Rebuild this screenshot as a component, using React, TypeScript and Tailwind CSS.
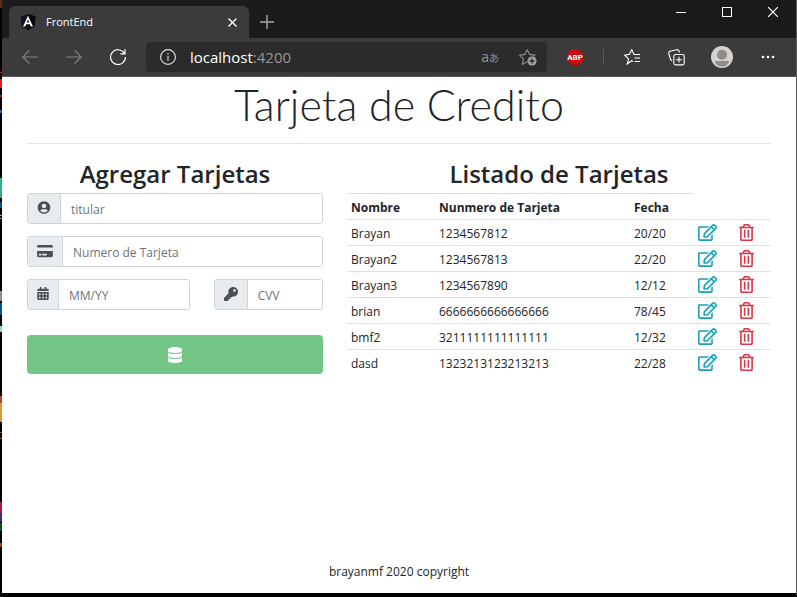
import React from 'react';
import type { IconType } from 'react-icons';
import { FaCalendarAlt, FaCreditCard, FaDatabase, FaKey, FaRegEdit, FaRegTrashAlt, FaUserCircle } from 'react-icons/fa';

const cards = [
  { name: 'Brayan', number: '1234567812', date: '20/20' },
  { name: 'Brayan2', number: '1234567813', date: '22/20' },
  { name: 'Brayan3', number: '1234567890', date: '12/12' },
  { name: 'brian', number: '6666666666666666', date: '78/45' },
  { name: 'bmf2', number: '3211111111111111', date: '12/32' },
  { name: 'dasd', number: '1323213123213213', date: '22/28' },
];

function DesktopEdge() {
  return (
    <svg className="pointer-events-none absolute left-0 top-0" width="2" height="597" aria-hidden="true">
      <rect width="2" height="597" fill="#000" />
      <rect y="0" width="2" height="8" fill="#5e2c0c" />
      <rect y="79" width="2" height="9" fill="#e01b1b" />
      <rect y="95" width="2" height="2" fill="#c01818" />
      <rect y="110" width="2" height="3" fill="#2f5fc0" />
      <rect y="72" width="2" height="1" fill="#c01818" />
      <rect y="178" width="2" height="12" fill="#2bb39a" />
      <rect y="190" width="2" height="8" fill="#3ea56c" />
      <rect y="202" width="2" height="6" fill="#0d4a8c" />
      <rect y="215" width="2" height="1" fill="#c8a882" />
      <rect y="218" width="2" height="1" fill="#a09090" />
      <rect y="291" width="2" height="10" fill="#8d8d98" />
      <rect y="303" width="2" height="12" fill="#07508a" />
      <rect y="326" width="2" height="6" fill="#8fd6b8" />
      <rect y="396" width="2" height="7" fill="#c44030" />
      <rect y="403" width="2" height="19" fill="#d6a02b" />
      <rect y="432" width="2" height="1" fill="#8c5810" />
      <rect y="438" width="2" height="1" fill="#8c5810" />
      <rect y="502" width="2" height="11" fill="#b01840" />
      <rect y="513" width="2" height="9" fill="#2b2f80" />
      <rect y="523" width="2" height="8" fill="#0f4a22" />
      <rect y="543" width="2" height="4" fill="#9c4410" />
    </svg>
  );
}

function TabBar() {
  return (
    <div className="flex h-[38px] items-end bg-[#1b1b1b] pl-[7px]">
      <div className="flex h-8 w-60 items-center rounded-t-md bg-[#3b3b3b] pl-[11px] pr-[11px] text-white">
        <svg width="16" height="16" viewBox="0 0 16 16" aria-hidden="true">
          <path d="M8 0 L15.5 2.6 L14.4 12.4 L8 16 L1.6 12.4 L.5 2.6Z" fill="#0e1420" />
          <path d="M8 0 L15.5 2.6 L14.4 12.4 L8 16Z" fill="#05070d" />
          <path d="M8 1.8 L3 12.6 H5.2 L6.1 10.3 H9.9 L10.8 12.6 H13Z M8 5.4 L9.3 8.5 H6.7Z" fill="#fff" fillRule="evenodd" />
        </svg>
        <span className="ml-2.5 flex-1 text-[11px]">FrontEnd</span>
        <button type="button" aria-label="Cerrar pestaña" className="flex size-3 items-center justify-center">
          <svg width="9" height="9" viewBox="0 0 9 9" stroke="#fff" strokeWidth="1.3"><path d="M.5 .5 L8.5 8.5 M8.5 .5 L.5 8.5" /></svg>
        </button>
      </div>
      <button type="button" aria-label="Nueva pestaña" className="mb-[9px] ml-[11px]">
        <svg width="14" height="14" viewBox="0 0 14 14" stroke="#a8a8a8" strokeWidth="1.4"><path d="M7 0 V14 M0 7 H14" /></svg>
      </button>
      <div className="ml-auto flex items-center gap-9 self-start pr-[18px] pt-[7px]">
        <button type="button" aria-label="Minimizar">
          <svg width="10" height="10" viewBox="0 0 10 10" stroke="#fff"><path d="M0 5.5 H10" /></svg>
        </button>
        <button type="button" aria-label="Maximizar">
          <svg width="10" height="10" viewBox="0 0 10 10" stroke="#fff" fill="none"><rect x=".5" y=".5" width="9" height="9" /></svg>
        </button>
        <button type="button" aria-label="Cerrar">
          <svg width="10" height="10" viewBox="0 0 10 10" stroke="#fff" strokeWidth="1.2"><path d="M0 0 L10 10 M10 0 L0 10" /></svg>
        </button>
      </div>
    </div>
  );
}

function Toolbar() {
  return (
    <div className="flex h-[39px] items-center border-b border-[#5c5c5c] bg-[#3b3b3b] pl-5 pr-[21px] text-white">
      <button type="button" aria-label="Atrás">
        <svg width="16" height="14" viewBox="0 0 16 14" stroke="#858585" fill="none" strokeWidth="1.1"><path d="M16 7 H.8 M7.3 .5 L.8 7 L7.3 13.5" /></svg>
      </button>
      <button type="button" aria-label="Adelante" className="ml-7">
        <svg width="16" height="14" viewBox="0 0 16 14" stroke="#858585" fill="none" strokeWidth="1.1"><path d="M0 7 H15.2 M8.7 .5 L15.2 7 L8.7 13.5" /></svg>
      </button>
      <button type="button" aria-label="Recargar" className="ml-7">
        <svg width="16" height="16" viewBox="0 0 16 16" stroke="#fff" fill="none" strokeWidth="1.2"><path d="M14.4 4.4 A7.4 7.4 0 1 0 15.4 8 M15 .2 V4.8 H10.4" /></svg>
      </button>
      <div className="ml-5 flex h-[30px] min-w-0 flex-1 items-center rounded bg-[#2b2b2b] pl-3.5 pr-2.5">
        <svg width="16" height="16" viewBox="0 0 16 16" stroke="#e4e4e4" fill="none" strokeWidth="1.1" aria-hidden="true"><circle cx="8" cy="8" r="7.4" /><path d="M8 6.8 V11.8 M8 4.3 V5.6" /></svg>
        <span className="ml-3.5 flex-1 text-[15px]">localhost<span className="text-[#969696]">:4200</span></span>
        <span className="pb-0.5 font-['Noto_Sans','Noto_Sans_CJK_JP',sans-serif] text-[#8e8e8e]"><span className="text-sm">a</span><span className="text-[10px]">あ</span></span>
        <button type="button" aria-label="Agregar a favoritos" className="ml-5">
          <svg width="18" height="17" viewBox="0 0 18 17" stroke="#8e8e8e" fill="none" strokeWidth="1.1">
            <path d="M8.5 12.6 L3.4 15.5 L4.4 9.9 L.7 6.2 L5.7 5.4 L8.2 .8 L10.6 5.4 L15.8 6.2 L14.3 7.6" />
            <circle cx="13" cy="12" r="4.6" fill="#a0a0a0" stroke="none" />
            <path d="M13 9.5 V14.5 M10.5 12 H15.5" stroke="#2b2b2b" strokeWidth="1.3" />
          </svg>
        </button>
      </div>
      <button type="button" aria-label="Adblock Plus" className="ml-5">
        <svg width="16" height="16" viewBox="0 0 16 16">
          <path d="M4.7 0 H11.3 L16 4.7 V11.3 L11.3 16 H4.7 L0 11.3 V4.7Z" fill="#c70d0d" />
          <text x="8" y="10.8" textAnchor="middle" fill="#fff" className="font-['Roboto',sans-serif] text-[8px] font-bold">ABP</text>
        </svg>
      </button>
      <span className="ml-5 h-4 w-px bg-[#5a5a5a]" />
      <button type="button" aria-label="Favoritos" className="ml-5">
        <svg width="17" height="16" viewBox="0 0 17 16" stroke="#fff" fill="none" strokeWidth="1.1">
          <path d="M9 12.4 L7.7 11.7 L3.2 15 L4.5 9.8 L.8 6.2 L5.4 5.3 L7.8 .8 L10 5.5 H16 M10.5 9 H16 M10.5 12.5 H16" />
        </svg>
      </button>
      <button type="button" aria-label="Colecciones" className="ml-[27px]">
        <svg width="17" height="17" viewBox="0 0 17 17" stroke="#fff" fill="none" strokeWidth="1.1">
          <rect x="5.8" y="5.5" width="10.4" height="10.4" rx="1.8" /><path d="M11 7.8 V13.6 M8 10.7 H14" />
          <path d="M4 11.7 Q2.8 11.3 2.4 10 L.8 4.5 Q.4 2.8 2 2.3 L8.5 .7 Q10.3 .4 11 2 L11.4 3.5" />
        </svg>
      </button>
      <button type="button" aria-label="Perfil" className="ml-[26px]">
        <svg width="22" height="22" viewBox="0 0 22 22">
          <circle cx="11" cy="11" r="11" fill="#d4d1ce" /><circle cx="11" cy="8.8" r="5" fill="#8f8c89" />
          <path d="M3.5 15 H18.5 Q16.5 20.5 11 20.5 Q5.5 20.5 3.5 15Z" fill="#8f8c89" />
        </svg>
      </button>
      <button type="button" aria-label="Más opciones" className="ml-7">
        <svg width="14" height="4" viewBox="0 0 14 4" fill="#fff"><circle cx="2" cy="2" r="1.3" /><circle cx="7" cy="2" r="1.3" /><circle cx="12" cy="2" r="1.3" /></svg>
      </button>
    </div>
  );
}

function Field({ id, label, icon: Icon, iconClass }: { id: string; label: string; icon: IconType; iconClass: string }) {
  return (
    <div className="flex h-[31px] rounded-[3px] border border-[#ced4da]">
      <label htmlFor={id} aria-label={label} className="flex items-center border-r border-[#ced4da] bg-[#e9ecef] px-[9px] pb-0.5 text-[#495057]">
        <Icon className={iconClass} />
      </label>
      <input id={id} type="text" placeholder={label} className="min-w-0 flex-1 rounded-r-[3px] bg-white px-2.5 pt-0.5 text-xs text-[#495057] outline-none placeholder:text-[#6c757d]" />
    </div>
  );
}

function CardForm() {
  return (
    <section className="w-5/12 px-3">
      <h2 className="text-center text-2xl font-semibold leading-[38px]">Agregar Tarjetas</h2>
      <form className="flex flex-col gap-3" onSubmit={(e) => e.preventDefault()}>
        <Field id="titular" label="titular" icon={FaUserCircle} iconClass="h-[13px] w-3.5" />
        <Field id="numero" label="Numero de Tarjeta" icon={FaCreditCard} iconClass="h-3.5 w-4" />
        <div className="-mx-3 flex">
          <div className="w-7/12 px-3">
            <Field id="fecha" label="MM/YY" icon={FaCalendarAlt} iconClass="h-[13px] w-3" />
          </div>
          <div className="w-5/12 px-3">
            <Field id="cvv" label="CVV" icon={FaKey} iconClass="size-3.5" />
          </div>
        </div>
        <button type="submit" aria-label="Guardar tarjeta" className="mt-[13px] flex h-[39px] items-center justify-center rounded bg-[#74c686] text-white">
          <FaDatabase className="size-4" />
        </button>
      </form>
    </section>
  );
}

function CardList() {
  return (
    <section className="w-7/12 px-3">
      <h2 className="text-center text-2xl font-semibold leading-[38px]">Listado de Tarjetas</h2>
      <table className="w-full table-fixed border-separate border-spacing-0 text-left text-xs">
        <colgroup>
          <col className="w-[88px]" />
          <col className="w-[195px]" />
          <col className="w-16" />
          <col className="w-[41px]" />
          <col />
        </colgroup>
        <thead>
          <tr className="h-[26px]">
            {['Nombre', 'Nunmero de Tarjeta', 'Fecha'].map((title) => (
              <th key={title} scope="col" className="border-t border-[#dee2e6] px-1 pb-0 pt-0.5 font-bold">{title}</th>
            ))}
          </tr>
        </thead>
        <tbody>
          {cards.map((card) => (
            <tr key={card.name} className="h-[26px]">
              <td className="border-t border-[#dee2e6] px-1 pb-0 pt-0.5">{card.name}</td>
              <td className="border-t border-[#dee2e6] px-1 pb-0 pt-0.5">{card.number}</td>
              <td className="border-t border-[#dee2e6] px-1 pb-0 pt-0.5">{card.date}</td>
              <td className="border-t border-[#dee2e6] px-1 py-0">
                <button type="button" aria-label={`Editar ${card.name}`} className="block text-[#17a2b8]"><FaRegEdit className="h-[17px] w-[19px]" /></button>
              </td>
              <td className="border-t border-[#dee2e6] px-1 py-0">
                <button type="button" aria-label={`Eliminar ${card.name}`} className="block text-[#dc3545]"><FaRegTrashAlt className="h-[17px] w-[15px]" /></button>
              </td>
            </tr>
          ))}
        </tbody>
      </table>
    </section>
  );
}

export default function App() {
  return (
    <div className="relative flex min-h-screen flex-col border-b-4 border-l-2 border-r border-b-black border-l-black border-r-[#5c5c5c] bg-white font-['Open_Sans','Noto_Sans',sans-serif] text-[#212529]">
      <TabBar />
      <Toolbar />
      <main className="flex-1 px-[25px]">
        <h1 className="border-b border-[#e5e5e5] pb-2.5 text-center font-['Lato','Open_Sans',sans-serif] text-[43px] font-light leading-14">Tarjeta de Credito</h1>
        <div className="-mx-3 mt-[11px] flex">
          <CardForm />
          <CardList />
        </div>
      </main>
      <footer className="pb-[11px] text-center text-xs leading-5">brayanmf 2020 copyright</footer>
      <div className="absolute -left-0.5 top-0"><DesktopEdge /></div>
    </div>
  );
}
